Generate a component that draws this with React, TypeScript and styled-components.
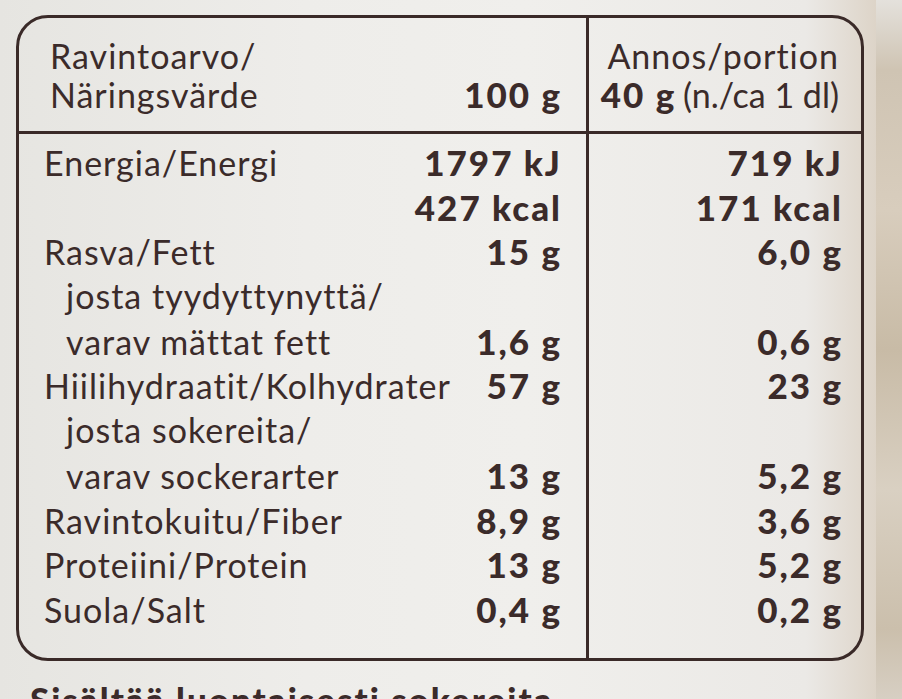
import styled, { createGlobalStyle } from "styled-components";

const GlobalStyle = createGlobalStyle`
  html, body {
    margin: 0;
    padding: 0;
    background: #ebeae6;
  }
  body {
    font-family: Lato, "Open Sans", sans-serif;
    color: #3b2b2a;
  }
`;

type Row = {
  label: string;
  sub?: boolean;
  per100?: string;
  portion?: string;
};

const rows: Row[] = [
  { label: "Energia/Energi", per100: "1797 kJ", portion: "719 kJ" },
  { label: "", per100: "427 kcal", portion: "171 kcal" },
  { label: "Rasva/Fett", per100: "15 g", portion: "6,0 g" },
  { label: "josta tyydyttynyttä/", sub: true },
  { label: "varav mättat fett", sub: true, per100: "1,6 g", portion: "0,6 g" },
  { label: "Hiilihydraatit/Kolhydrater", per100: "57 g", portion: "23 g" },
  { label: "josta sokereita/", sub: true },
  { label: "varav sockerarter", sub: true, per100: "13 g", portion: "5,2 g" },
  { label: "Ravintokuitu/Fiber", per100: "8,9 g", portion: "3,6 g" },
  { label: "Proteiini/Protein", per100: "13 g", portion: "5,2 g" },
  { label: "Suola/Salt", per100: "0,4 g", portion: "0,2 g" },
];

const HEAD_LINE = 39;
const BODY_LINE = 44.7;

const App = () => {
  return (
    <>
      <GlobalStyle />
      <Page>
        <Sheet>
          <Label>
            <Header>
              <HeadLeft>
                <Line $h={HEAD_LINE}>Ravintoarvo/</Line>
                <Line $h={HEAD_LINE}>
                  <span>Näringsvärde</span>
                  <Value>100 g</Value>
                </Line>
              </HeadLeft>
              <HeadRight>
                <Line $h={HEAD_LINE} $right>
                  Annos/portion
                </Line>
                <Line $h={HEAD_LINE} $right>
                  <Value>40 g</Value>
                  <Note>&nbsp;(n./ca 1 dl)</Note>
                </Line>
              </HeadRight>
            </Header>
            <Body>
              <LeftCol>
                {rows.map((r, i) => (
                  <Line key={i} $h={BODY_LINE}>
                    <Name $sub={r.sub}>{r.label}</Name>
                    {r.per100 && <Value>{r.per100}</Value>}
                  </Line>
                ))}
              </LeftCol>
              <RightCol>
                {rows.map((r, i) => (
                  <Line key={i} $h={BODY_LINE} $right>
                    {r.portion && <Value>{r.portion}</Value>}
                  </Line>
                ))}
              </RightCol>
            </Body>
          </Label>
          <Footnote>Sisältää luontaisesti sokereita</Footnote>
        </Sheet>
        <Edge />
      </Page>
    </>
  );
};

export default App;

const Page = styled.div`
  display: flex;
  width: 902px;
  height: 699px;
  overflow: hidden;
`;

const Sheet = styled.div`
  flex: 1;
  padding: 15px 12px 0 16px;
  background: linear-gradient(
    90deg,
    #e6e5e1 0%,
    #eeedea 35%,
    #f0efec 60%,
    #ebe9e6 92%,
    #ddd4c8 100%
  );
`;

const Edge = styled.div`
  width: 26px;
  background: linear-gradient(
    180deg,
    #e4e1dc 0%,
    #cfc4b3 10%,
    #d8cdbd 30%,
    #c8bba6 50%,
    #d9d0c2 70%,
    #cbbfac 90%,
    #d7cfc3 100%
  );
`;

const Label = styled.div`
  border: 3px solid #3a2a28;
  border-radius: 32px;
  height: 646px;
  box-sizing: border-box;
  display: flex;
  flex-direction: column;
  font-size: 34px;
  letter-spacing: 1px;
`;

const Header = styled.div`
  display: grid;
  grid-template-columns: 567px 1fr;
  border-bottom: 3px solid #3a2a28;
`;

const HeadLeft = styled.div`
  padding: 18px 26px 17px 31px;
`;

const HeadRight = styled.div`
  border-left: 3px solid #3a2a28;
  padding: 18px 22px 17px 0;
`;

const Body = styled.div`
  flex: 1;
  display: grid;
  grid-template-columns: 567px 1fr;
`;

const LeftCol = styled.div`
  padding: 6px 26px 0 25px;
`;

const RightCol = styled.div`
  border-left: 3px solid #3a2a28;
  padding: 6px 20px 0 0;
`;

const Line = styled.div<{ $h: number; $right?: boolean }>`
  display: flex;
  justify-content: ${(p) => (p.$right ? "flex-end" : "space-between")};
  align-items: baseline;
  height: ${(p) => p.$h}px;
  line-height: ${(p) => p.$h}px;
  white-space: nowrap;
`;

const Name = styled.span<{ $sub?: boolean }>`
  padding-left: ${(p) => (p.$sub ? "22px" : "0")};
`;

const Value = styled.span`
  font-size: 35px;
  font-weight: 900;
  letter-spacing: 2px;
  margin-right: -2px;
`;

const Note = styled.span`
  letter-spacing: 0;
`;

const Footnote = styled.div`
  margin: 17px 0 0 14px;
  font-size: 35px;
  font-weight: 900;
  letter-spacing: 2px;
  white-space: nowrap;
`;
